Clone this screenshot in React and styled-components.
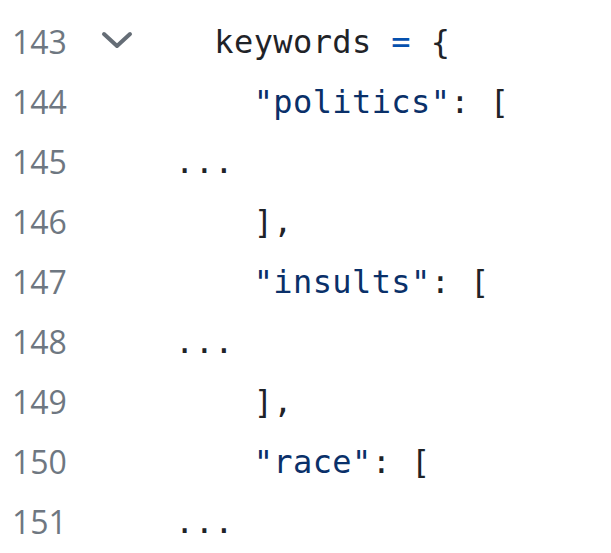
import React from "react";
import styled, { createGlobalStyle } from "styled-components";

const GlobalStyle = createGlobalStyle`
  html, body {
    margin: 0;
    padding: 0;
    background: #ffffff;
  }
`;

const lines = [
  { num: 143, fold: true, indent: 2, parts: [["plain", "keywords "], ["op", "="], ["plain", " {"]] },
  { num: 144, indent: 4, parts: [["str", '"politics"'], ["plain", ": ["]] },
  { num: 145, indent: 0, parts: [["plain", "..."]] },
  { num: 146, indent: 4, parts: [["plain", "],"]] },
  { num: 147, indent: 4, parts: [["str", '"insults"'], ["plain", ": ["]] },
  { num: 148, indent: 0, parts: [["plain", "..."]] },
  { num: 149, indent: 4, parts: [["plain", "],"]] },
  { num: 150, indent: 4, parts: [["str", '"race"'], ["plain", ": ["]] },
  { num: 151, indent: 0, parts: [["plain", "..."]] },
];

const App = () => {
  return (
    <>
      <GlobalStyle />
      <Editor>
        {lines.map((line) => (
          <Row key={line.num}>
            <LineNumber>{line.num}</LineNumber>
            <Fold>
              {line.fold && (
                <svg width="32" height="20" viewBox="0 0 32 20">
                  <polyline
                    points="3,4 16,16 29,4"
                    fill="none"
                    stroke="#656d76"
                    strokeWidth="4"
                    strokeLinecap="round"
                    strokeLinejoin="round"
                  />
                </svg>
              )}
            </Fold>
            <Code>
              {" ".repeat(line.indent)}
              {line.parts.map(([kind, text], i) => (
                <Token key={i} $kind={kind}>
                  {text}
                </Token>
              ))}
            </Code>
          </Row>
        ))}
      </Editor>
    </>
  );
};

const Editor = styled.div`
  padding-top: 12px;
  background: #ffffff;
`;

const Row = styled.div`
  display: grid;
  grid-template-columns: 90px 84px 1fr;
  align-items: center;
  height: 60px;
`;

const LineNumber = styled.div`
  padding-left: 12px;
  font-family: "Open Sans", "Noto Sans", sans-serif;
  font-size: 32px;
  line-height: 60px;
  color: #6e7781;
`;

const Fold = styled.div`
  display: flex;
  align-items: center;
  padding-left: 11px;
  height: 60px;
  margin-top: -4px;
`;

const Code = styled.div`
  padding-left: 1px;
  font-family: "DejaVu Sans Mono", "Liberation Mono", monospace;
  font-size: 32px;
  letter-spacing: 0.4px;
  line-height: 60px;
  white-space: pre;
  color: #1f2328;
`;

const colors = {
  plain: "#1f2328",
  op: "#0550ae",
  str: "#0a3069",
};

const Token = styled.span`
  color: ${(p) => colors[p.$kind]};
`;

export default App;
